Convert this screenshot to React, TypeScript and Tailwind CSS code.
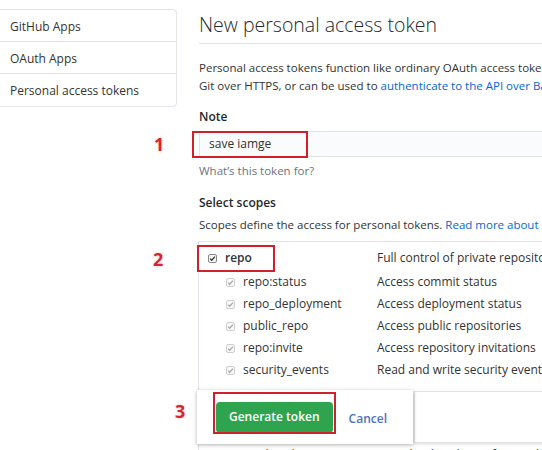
const font = { fontFamily: '"Open Sans", "Noto Sans", Arial, sans-serif' }

const subScopes = [
  ["repo:status", "Access commit status"],
  ["repo_deployment", "Access deployment status"],
  ["public_repo", "Access public repositories"],
  ["repo:invite", "Access repository invitations"],
  ["security_events", "Read and write security events"],
]

function Check({ dark = false, checked = true }: { dark?: boolean; checked?: boolean }) {
  return (
    <span
      className={`inline-flex h-[9px] w-[9px] shrink-0 items-center justify-center rounded-[2px] border ${
        dark ? "border-[#8a8a8a] bg-[#f4f4f4]" : "border-[#d0d0d0] bg-[#f8f8f8]"
      }`}
    >
      {checked && (
        <svg viewBox="0 0 8 8" className="h-[7px] w-[7px]">
          <path
            d="M1.3 4.2 L3.1 6 L6.8 1.8"
            fill="none"
            stroke={dark ? "#333" : "#a8a8a8"}
            strokeWidth="1.4"
          />
        </svg>
      )}
    </span>
  )
}

function Marker({ n }: { n: string }) {
  return (
    <span className="text-[18px] font-bold leading-none text-[#d3262e] [text-shadow:0_0_2px_#fff,0_0_3px_#f2b5b5]">
      {n}
    </span>
  )
}

export default function App() {
  return (
    <div className="relative h-[450px] w-[542px] overflow-hidden bg-white text-[#24292e]" style={font}>
      <div className="flex">
        {/* sidebar */}
        <div className="-ml-px mt-[9px] w-[178px] shrink-0 self-start rounded-r-[4px] border border-[#e1e4e8] text-[12px] text-[#333]">
          <div className="flex h-[32px] items-center border-b border-[#e1e4e8] pl-[10px] pt-[2px]">GitHub Apps</div>
          <div className="flex h-[32px] items-center border-b border-[#e1e4e8] pl-[10px] pt-[2px]">OAuth Apps</div>
          <div className="flex h-[32px] items-center pl-[10px] pt-[2px]">Personal access tokens</div>
        </div>

        {/* main */}
        <div className="ml-[22px] w-[420px] shrink-0">
          <h1 className="border-b border-[#e1e4e8] pb-[3px] pt-[10px] text-[19.5px] font-light leading-[30px] whitespace-nowrap">
            New personal access token
          </h1>

          <p className="mt-[15px] whitespace-nowrap text-[11.5px] leading-[18px] text-[#333]">
            Personal access tokens function like ordinary OAuth access tokens. They can be used instead of a password for
            <br />
            Git over HTTPS, or can be used to{" "}
            <span className="text-[#0366d6]">authenticate to the API over Basic Authentication.</span>
          </p>

          <div className="mt-[13px] text-[12px] font-semibold leading-[18px]">Note</div>
          <div className="relative mt-[5px] flex h-[26px] items-center border border-[#e1e4e8] bg-[#fafbfc] pl-[9px] text-[12px] text-[#333]">
            save iamge
            <div className="absolute -left-[8px] -top-px h-[27px] w-[116px] border-2 border-[#d0212b]" />
            <div className="absolute -left-[46px] top-[3px]">
              <Marker n="1" />
            </div>
          </div>
          <div className="mt-[5px] text-[11.5px] leading-[18px] text-[#6a737d]">What’s this token for?</div>

          <div className="mt-[14px] text-[12px] font-semibold leading-[18px]">Select scopes</div>
          <div className="mt-[4px] whitespace-nowrap text-[11.5px] leading-[18px] text-[#333]">
            Scopes define the access for personal tokens.{" "}
            <span className="text-[#0366d6]">Read more about OAuth scopes.</span>
          </div>

          {/* scopes table */}
          <div className="-ml-px mt-[7px] border-l border-t border-[#e1e4e8] text-[12px] leading-[18px] text-[#333]">
            <div className="relative grid h-[29px] grid-cols-[178px_1fr] items-center pt-[3px]">
              <div className="flex items-center gap-[8px] pl-[9px]">
                <Check dark />
                <span className="font-semibold">repo</span>
              </div>
              <div className="whitespace-nowrap">Full control of private repositories</div>
              <div className="absolute -left-[2px] top-[3px] h-[27px] w-[78px] border-2 border-[#d0212b]" />
              <div className="absolute -left-[46px] top-[8px]">
                <Marker n="2" />
              </div>
            </div>
            {subScopes.map(([name, desc]) => (
              <div key={name} className="grid h-[22px] grid-cols-[178px_1fr] items-center">
                <div className="flex items-center gap-[8px] pl-[27px]">
                  <Check />
                  <span>{name}</span>
                </div>
                <div className="whitespace-nowrap">{desc}</div>
              </div>
            ))}

            {/* sticky footer */}
            <div className="relative z-10 -ml-[2px] mt-[9px] flex h-[54px]">
              <div className="relative flex w-[216px] items-center bg-white pl-[19px] shadow-[0_1px_4px_rgba(0,0,0,0.3)]">
                <button className="h-[31px] rounded-[4px] bg-[#2ea44f] px-[13px] text-[12px] font-semibold text-white">
                  Generate token
                </button>
                <span className="ml-[16px] mt-[4px] text-[12px] font-semibold text-[#4a73c2]">Cancel</span>
                <div className="absolute left-[16px] top-[2px] h-[42px] w-[123px] border-2 border-[#d0212b]" />
                <div className="absolute -left-[22px] top-[12px]">
                  <Marker n="3" />
                </div>
              </div>
              <div className="my-px ml-px w-[200px] border border-r-0 border-[#e4e4e4] bg-white shadow-[-1px_1px_3px_rgba(0,0,0,0.15)]" />
            </div>

            <div className="grid h-[22px] grid-cols-[178px_1fr] items-center">
              <div className="flex items-center gap-[8px] pl-[27px]">
                <Check checked={false} />
                <span>read:packages</span>
              </div>
              <div className="whitespace-nowrap">Download packages from github package registry</div>
            </div>
          </div>
        </div>
      </div>
    </div>
  )
}
